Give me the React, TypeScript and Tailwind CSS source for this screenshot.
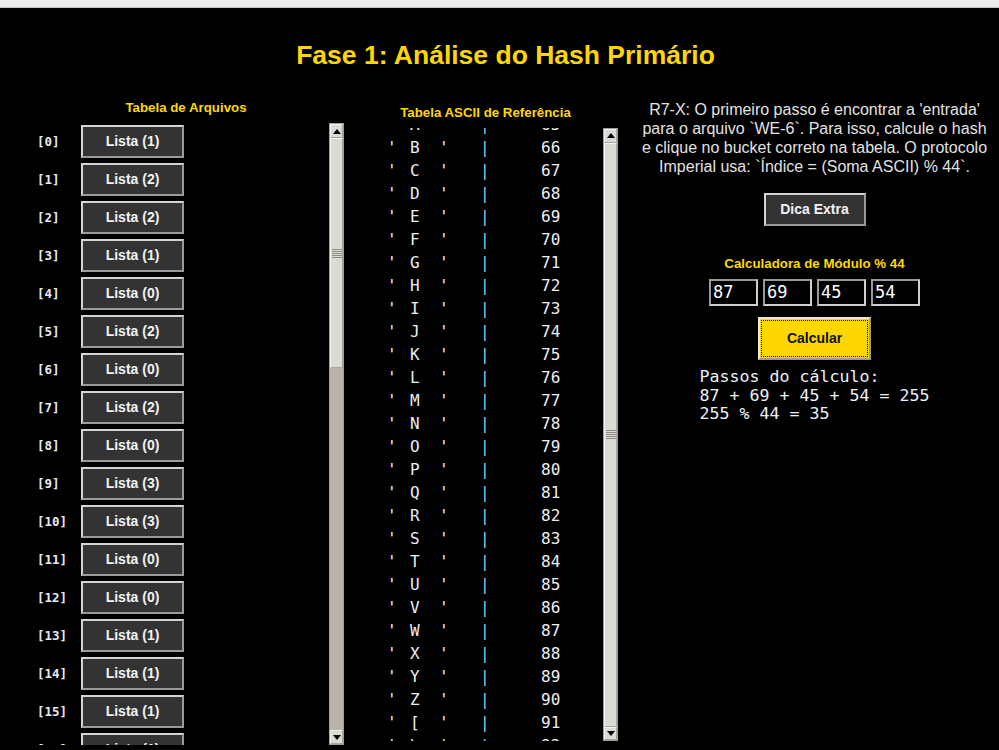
import React from 'react';

const buckets = [1, 2, 2, 1, 0, 2, 0, 2, 0, 3, 3, 0, 0, 1, 1, 1, 1];

const asciiRows = Array.from({ length: 31 }, (_, i) => 65 + i);

const hintLines = [
  "R7-X: O primeiro passo é encontrar a 'entrada'",
  'para o arquivo `WE-6`. Para isso, calcule o hash',
  'e clique no bucket correto na tabela. O protocolo',
  'Imperial usa: `Índice = (Soma ASCII) % 44`.',
];

function Arrow({ up }: { up?: boolean }) {
  return (
    <div className="h-[14px] flex items-center justify-center bg-[#dcdad5] border border-[#f4f3f1] border-r-[#a8a49b] border-b-[#a8a49b]">
      <svg width="8" height="5" viewBox="0 0 8 5">
        {up ? <path d="M0 5 L4 0 L8 5 Z" fill="#000" /> : <path d="M0 0 L4 5 L8 0 Z" fill="#000" />}
      </svg>
    </div>
  );
}

function Scrollbar({ thumbClass }: { thumbClass: string }) {
  return (
    <div className="w-[15px] shrink-0 flex flex-col bg-[#b8b4aa] border border-[#a29e95]">
      <Arrow up />
      <div className="flex-1 flex flex-col">
        <div className={`${thumbClass} flex flex-col items-center justify-center bg-[#dcdad5] border border-[#f4f3f1] border-r-[#a8a49b] border-b-[#a8a49b]`}>
          <div className="flex flex-col gap-[1px]">
            <div className="w-[10px] h-[1px] bg-[#8e8b85]" />
            <div className="w-[10px] h-[1px] bg-[#8e8b85]" />
            <div className="w-[10px] h-[1px] bg-[#8e8b85]" />
            <div className="w-[10px] h-[1px] bg-[#8e8b85]" />
            <div className="w-[10px] h-[1px] bg-[#8e8b85]" />
          </div>
        </div>
      </div>
      <Arrow />
    </div>
  );
}

function DarkButton({ label, className }: { label: string; className: string }) {
  return (
    <button
      className={`${className} bg-[#333333] text-[#f2f2f2] font-bold text-[14px] font-['Liberation_Sans',sans-serif] border-2 border-[#d4d4d4] border-r-[#9a9a9a] border-b-[#9a9a9a] flex items-center justify-center`}
    >
      {label}
    </button>
  );
}

export default function App() {
  return (
    <div className="w-[999px] h-[750px] overflow-hidden bg-black flex flex-col font-['Liberation_Sans',sans-serif]">
      <div className="h-[8px] shrink-0 bg-[#ececec] border-b border-[#c4c4c4]" />

      <h1 className="mt-[32px] pl-[12px] text-center text-[26.5px] leading-[30px] font-bold text-[#ffd700]">
        Fase 1: Análise do Hash Primário
      </h1>

      <div className="mt-[30px] flex">
        {/* file table */}
        <div className="ml-[28px] w-[316px] flex flex-col">
          <div className="text-center text-[13.3px] leading-[16px] font-bold text-[#ffd700]">Tabela de Arquivos</div>
          <div className="mt-[7px] h-[622px] flex">
            <div className="flex-1 overflow-hidden pt-[2px] pl-[9px] flex flex-col gap-[5px]">
              {buckets.map((n, i) => (
                <div key={i} className="flex items-center shrink-0">
                  <span className="w-[44px] pt-[1px] text-[12.5px] font-bold text-[#e6e9f2] font-['DejaVu_Sans_Mono',monospace]">
                    [{i}]
                  </span>
                  <DarkButton label={`Lista (${n})`} className="w-[103px] h-[33px]" />
                </div>
              ))}
            </div>
            <Scrollbar thumbClass="h-[230px]" />
          </div>
        </div>

        {/* ascii table */}
        <div className="ml-[9px] w-[265px] pt-[5px] flex flex-col">
          <div className="text-center text-[13.3px] leading-[16px] font-bold text-[#ffd700]">Tabela ASCII de Referência</div>
          <div className="mt-[7px] h-[613px] flex">
            <div className="flex-1 overflow-hidden">
              <div className="-mt-[15px] flex flex-col font-['DejaVu_Sans_Mono',monospace] text-[16px] text-[#eceef4]">
                {asciiRows.map((code) => (
                  <div key={code} className="h-[23px] flex items-center whitespace-pre pl-[34px]">
                    <span className="w-[23px]">'</span>
                    <span className="w-[29px]">{String.fromCharCode(code)}</span>
                    <span className="w-[41px]">'</span>
                    <span className="w-[61px] text-[#87ceeb]">|</span>
                    <span>{code}</span>
                  </div>
                ))}
              </div>
            </div>
            <Scrollbar thumbClass="h-[584px]" />
          </div>
        </div>

        {/* hint + calculator */}
        <div className="ml-[12px] flex-1 flex flex-col items-center">
          <div className="text-center text-[16px] leading-[19px] text-[#e2e2e2]">
            {hintLines.map((l) => (
              <div key={l} className="whitespace-pre">{l}</div>
            ))}
          </div>

          <DarkButton label="Dica Extra" className="mt-[17px] w-[102px] h-[33px]" />

          <div className="mt-[30px] text-[13.3px] leading-[16px] font-bold text-[#ffd700]">Calculadora de Módulo % 44</div>

          <div className="mt-[7px] flex gap-[5px]">
            {['87', '69', '45', '54'].map((v) => (
              <div
                key={v}
                className="w-[49px] h-[27px] bg-black border-2 border-[#9a9a9a] border-r-[#d0d0d0] border-b-[#d0d0d0] px-[2px] flex items-center text-[17px] text-white font-['DejaVu_Sans_Mono',monospace]"
              >
                {v}
              </div>
            ))}
          </div>

          <button className="mt-[11px] w-[113px] h-[43px] bg-[#ffd700] border-2 border-[#e8e8e8] border-r-[#9a9a9a] border-b-[#9a9a9a] p-[1px]">
            <div className="w-full h-full border border-dotted border-black flex items-center justify-center text-[14px] font-bold text-[#111]">
              Calcular
            </div>
          </button>

          <div className="mt-[8px] text-left whitespace-pre text-[16.6px] leading-[18.5px] text-[#eef0f8] font-['DejaVu_Sans_Mono',monospace]">
            <div>Passos do cálculo:</div>
            <div>87 + 69 + 45 + 54 = 255</div>
            <div>255 % 44 = 35</div>
          </div>
        </div>
      </div>
    </div>
  );
}
